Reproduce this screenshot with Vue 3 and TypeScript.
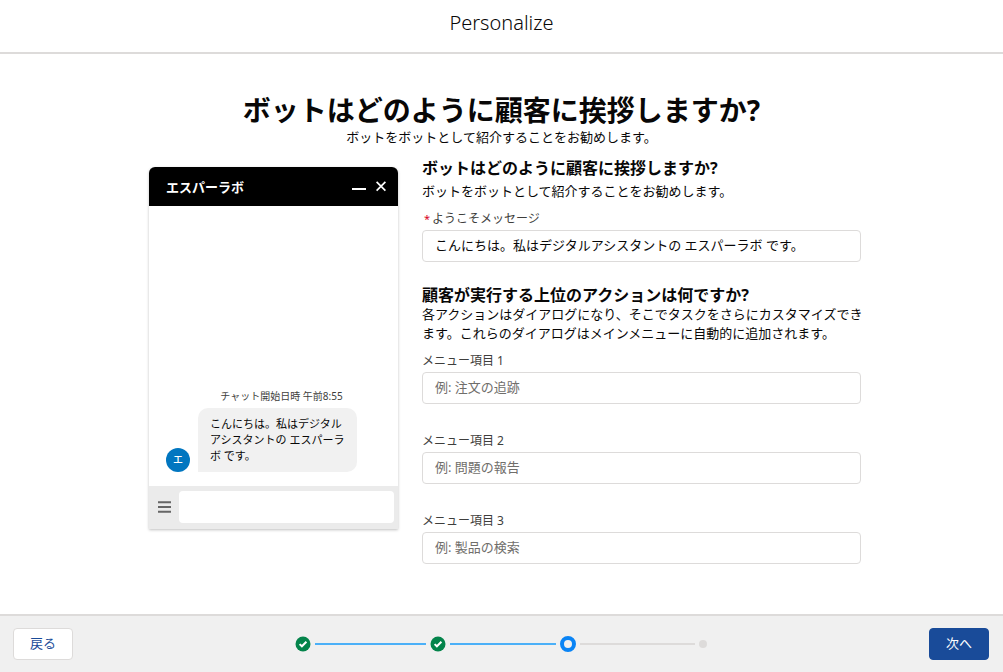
<script setup lang="ts">
import { ref } from 'vue'

interface MenuField {
  id: string
  label: string
  placeholder: string
}

const botName = 'エスパーラボ'
const welcome = ref('こんにちは。私はデジタルアシスタントの エスパーラボ です。')
const reply = ref('')

const fields: MenuField[] = [
  { id: 'menu-1', label: 'メニュー項目 1', placeholder: '例: 注文の追跡' },
  { id: 'menu-2', label: 'メニュー項目 2', placeholder: '例: 問題の報告' },
  { id: 'menu-3', label: 'メニュー項目 3', placeholder: '例: 製品の検索' },
]
const menuItems = ref<string[]>(fields.map(() => ''))
</script>

<template>
  <div class="wizard">
    <header class="topbar">
      <h1 class="topbar-title">Personalize</h1>
    </header>

    <main class="content">
      <div class="intro">
        <h2 class="intro-title">ボットはどのように顧客に挨拶しますか?</h2>
        <p class="text">ボットをボットとして紹介することをお勧めします。</p>
      </div>

      <div class="columns">
        <section class="chat" aria-label="チャットのプレビュー">
          <div class="chat-head">
            <span class="chat-name">{{ botName }}</span>
            <button class="chat-action" type="button" aria-label="最小化">
              <svg width="14" height="14" viewBox="0 0 14 14"><path d="M0 9h14" stroke="currentColor" stroke-width="2" /></svg>
            </button>
            <button class="chat-action" type="button" aria-label="閉じる">
              <svg width="10" height="14" viewBox="0 0 10 14"><path d="M.6 1.8l8.8 8.8M9.4 1.8L.6 10.6" stroke="currentColor" stroke-width="1.7" /></svg>
            </button>
          </div>
          <div class="chat-body">
            <p class="chat-time">チャット開始日時 午前8:55</p>
            <div class="chat-row">
              <span class="avatar">エ</span>
              <p class="bubble">{{ welcome }}</p>
            </div>
          </div>
          <div class="chat-foot">
            <button class="chat-menu" type="button" aria-label="メニュー">
              <svg width="13" height="12" viewBox="0 0 13 12"><path d="M0 1.2h13M0 6h13M0 10.8h13" stroke="currentColor" stroke-width="2" /></svg>
            </button>
            <input v-model="reply" class="chat-input" type="text" aria-label="メッセージ" />
          </div>
        </section>

        <form class="form" @submit.prevent>
          <h3 class="subhead">ボットはどのように顧客に挨拶しますか?</h3>
          <p class="text lead">ボットをボットとして紹介することをお勧めします。</p>
          <label class="label required" for="welcome"><span class="star">*</span>ようこそメッセージ</label>
          <input id="welcome" v-model="welcome" class="field" type="text" required />

          <h3 class="subhead second">顧客が実行する上位のアクションは何ですか?</h3>
          <p class="text wide">各アクションはダイアログになり、そこでタスクをさらにカスタマイズできます。これらのダイアログはメインメニューに自動的に追加されます。</p>
          <div class="menu-list">
            <div v-for="(field, i) in fields" :key="field.id" class="menu-item">
              <label class="label" :for="field.id">{{ field.label }}</label>
              <input :id="field.id" v-model="menuItems[i]" class="field" type="text" :placeholder="field.placeholder" />
            </div>
          </div>
        </form>
      </div>
    </main>

    <footer class="bottombar">
      <button class="btn" type="button">戻る</button>
      <div class="steps" role="progressbar" aria-label="進行状況" aria-valuemin="1" aria-valuemax="4" aria-valuenow="3">
        <svg class="check" viewBox="0 0 16 16"><circle cx="8" cy="8" r="7.5" /><path d="M4.6 8.1l2.3 2.2 4.5-4.5" /></svg>
        <span class="line done"></span>
        <svg class="check" viewBox="0 0 16 16"><circle cx="8" cy="8" r="7.5" /><path d="M4.6 8.1l2.3 2.2 4.5-4.5" /></svg>
        <span class="line done"></span>
        <span class="current"></span>
        <span class="line"></span>
        <span class="dot"></span>
      </div>
      <button class="btn primary" type="button">次へ</button>
    </footer>
  </div>
</template>

<style>
body {
  margin: 0;
  background: #fff;
}
</style>

<style scoped>
.wizard {
  display: flex;
  flex-direction: column;
  min-height: 100vh;
  color: #080707;
  font-family: "Noto Sans", "Noto Sans CJK JP", sans-serif;
  font-size: 13px;
  line-height: 20px;
}
.wizard *,
.wizard {
  box-sizing: border-box;
}
h1,
h2,
h3,
p {
  margin: 0;
}
button,
input {
  font: inherit;
}
button {
  cursor: pointer;
}
.topbar {
  padding: 8px 16px 14px;
  border-bottom: 2px solid #dddbda;
  text-align: center;
}
.topbar-title {
  font-size: 20px;
  font-weight: 300;
  line-height: 30px;
}
.content {
  flex: 1;
  width: 100%;
  max-width: 719px;
  margin: 0 auto;
  padding: 38px 0 48px;
}
.intro {
  text-align: center;
}
.intro-title {
  font-size: 28px;
  font-weight: 700;
  line-height: 36px;
}
.text {
  font-size: 13px;
  line-height: 19px;
}
.columns {
  display: flex;
  align-items: flex-start;
  gap: 24px;
  padding: 11px 0 0 7px;
}
.chat {
  flex: 249;
  min-width: 0;
  margin-top: 9px;
  border-radius: 6px 6px 0 0;
  background: #fff;
  box-shadow: 0 1px 3px rgba(0, 0, 0, 0.25);
}
.chat-head {
  display: flex;
  align-items: center;
  gap: 10px;
  height: 39px;
  padding: 0 12px 0 17px;
  border-radius: 6px 6px 0 0;
  background: #000;
  color: #fff;
}
.chat-name {
  flex: 1;
  font-weight: 600;
}
.chat-action {
  display: flex;
  padding: 0;
  border: 0;
  background: none;
  color: #fff;
}
.chat-body {
  display: flex;
  flex-direction: column;
  justify-content: flex-end;
  min-height: 280px;
  padding: 0 17px 14px;
}
.chat-time {
  margin-bottom: 4px;
  padding-left: 16px;
  color: #3e3e3c;
  font-size: 10px;
  line-height: 16px;
  text-align: center;
}
.chat-row {
  display: flex;
  align-items: flex-end;
  gap: 8px;
}
.avatar {
  flex: none;
  width: 24px;
  height: 24px;
  border-radius: 50%;
  background: #0176c0;
  color: #fff;
  font-size: 10px;
  font-weight: 500;
  line-height: 22px;
  text-align: center;
}
.bubble {
  max-width: 159px;
  padding: 8px 12px;
  border-radius: 10px 10px 10px 0;
  background: #f1f1f1;
  font-size: 11px;
  line-height: 16px;
}
.chat-foot {
  display: flex;
  align-items: center;
  gap: 8px;
  padding: 5px 4px 6px 9px;
  background: #ebebeb;
}
.chat-menu {
  display: flex;
  padding: 0;
  border: 0;
  background: none;
  color: #666;
}
.chat-input {
  flex: 1;
  min-width: 0;
  height: 32px;
  padding: 0 8px;
  border: 0;
  border-radius: 4px;
  background: #fff;
}
.form {
  flex: 439;
  min-width: 0;
}
.subhead {
  font-size: 16px;
  font-weight: 700;
  line-height: 20px;
}
.second {
  margin-top: 23px;
}
.lead {
  margin-top: 4px;
}
.wide {
  margin-right: -4px;
}
.label {
  display: block;
  margin: 7px 0 2px;
  color: #3e3e3c;
  font-size: 12px;
  line-height: 18px;
}
.required {
  margin-top: 9px;
}
.star {
  margin: 0 2px;
  color: #d8001e;
  font-size: 11px;
}
.field {
  display: block;
  width: 100%;
  height: 32px;
  padding: 0 12px 3px;
  border: 1px solid #dddbda;
  border-radius: 4px;
  background: #fff;
  color: #080707;
}
.field::placeholder {
  color: #706e6b;
  opacity: 1;
}
.menu-list {
  display: flex;
  flex-direction: column;
  gap: 21px;
  padding-top: 2px;
}
.bottombar {
  display: flex;
  align-items: center;
  justify-content: space-between;
  gap: 16px;
  padding: 12px 14px 12px 13px;
  border-top: 2px solid #dddbda;
  background: #f0f0f0;
}
.btn {
  min-width: 60px;
  height: 32px;
  padding: 0 15px 3px;
  border: 1px solid #dddbda;
  border-radius: 4px;
  background: #fff;
  color: #194b99;
}
.primary {
  border-color: #194b99;
  background: #194b99;
  color: #fff;
}
.steps {
  display: grid;
  flex: 0 1 412px;
  grid-template-columns: 16px 111fr 16px 106fr 16px 115fr 8px;
  align-items: center;
  gap: 4px;
}
.check {
  width: 16px;
  height: 16px;
}
.check circle {
  fill: #04844b;
}
.check path {
  fill: none;
  stroke: #fff;
  stroke-width: 2;
}
.line {
  height: 2px;
  background: #dddbda;
}
.done {
  background: #4bb0f8;
}
.current {
  width: 16px;
  height: 16px;
  border: 4px solid #0a84f5;
  border-radius: 50%;
}
.dot {
  width: 8px;
  height: 8px;
  border-radius: 50%;
  background: #dddbda;
}
</style>
